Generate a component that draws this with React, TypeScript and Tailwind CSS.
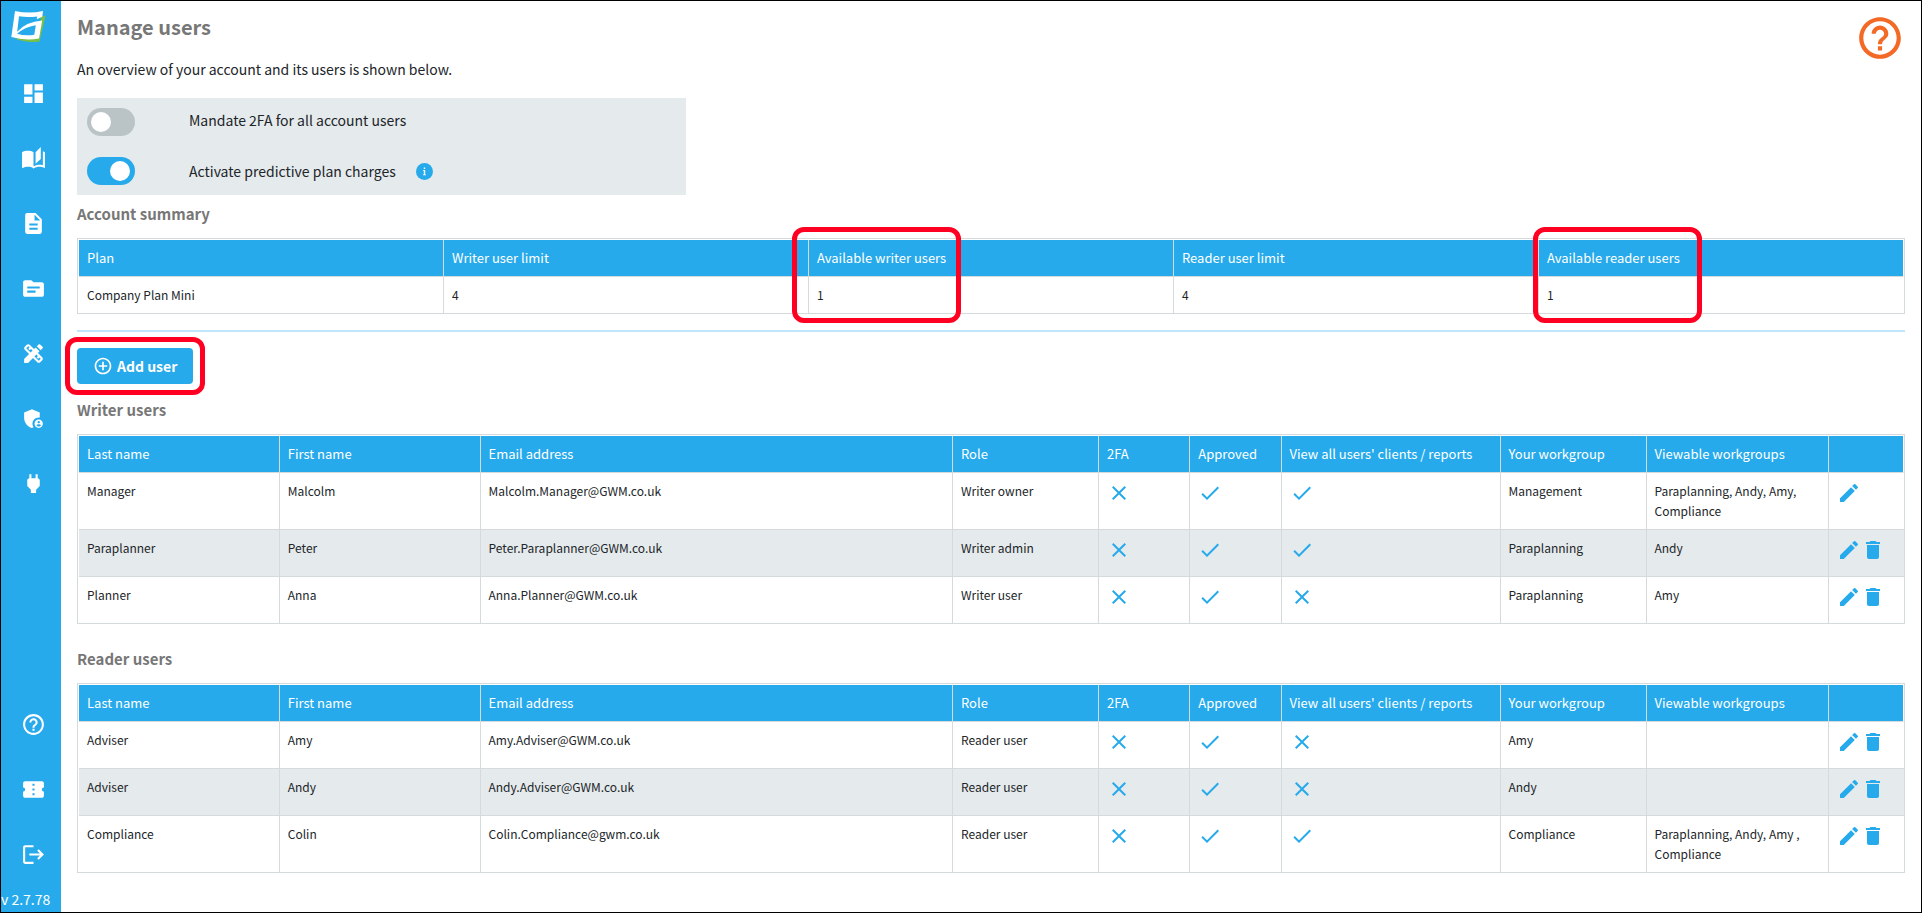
import React from 'react';
import type { IconType } from 'react-icons';
import {
  MdAddCircleOutline,
  MdAdminPanelSettings,
  MdAutoStories,
  MdCheck,
  MdClose,
  MdConfirmationNumber,
  MdDashboard,
  MdDelete,
  MdDescription,
  MdDesignServices,
  MdEdit,
  MdHelpOutline,
  MdLogout,
  MdPower,
  MdTopic,
} from 'react-icons/md';

interface NavItem {
  label: string;
  icon: IconType;
}

interface User {
  lastName: string;
  firstName: string;
  email: string;
  role: string;
  twoFactor: boolean;
  approved: boolean;
  viewAll: boolean;
  workgroup: string;
  viewable: string;
  canDelete: boolean;
}

const MAIN_NAV: NavItem[] = [
  { label: 'Dashboard', icon: MdDashboard },
  { label: 'Library', icon: MdAutoStories },
  { label: 'Reports', icon: MdDescription },
  { label: 'Templates', icon: MdTopic },
  { label: 'Design', icon: MdDesignServices },
  { label: 'Administration', icon: MdAdminPanelSettings },
  { label: 'Integrations', icon: MdPower },
];

const FOOTER_NAV: NavItem[] = [
  { label: 'Help', icon: MdHelpOutline },
  { label: 'Tickets', icon: MdConfirmationNumber },
  { label: 'Log out', icon: MdLogout },
];

const SUMMARY = [
  { title: 'Plan', value: 'Company Plan Mini', highlight: '' },
  { title: 'Writer user limit', value: '4', highlight: '' },
  { title: 'Available writer users', value: '1', highlight: '-left-[17px]' },
  { title: 'Reader user limit', value: '4', highlight: '' },
  { title: 'Available reader users', value: '1', highlight: '-left-1.5' },
];

const WRITERS: User[] = [
  { lastName: 'Manager', firstName: 'Malcolm', email: 'Malcolm.Manager@GWM.co.uk', role: 'Writer owner', twoFactor: false, approved: true, viewAll: true, workgroup: 'Management', viewable: 'Paraplanning, Andy, Amy, Compliance', canDelete: false },
  { lastName: 'Paraplanner', firstName: 'Peter', email: 'Peter.Paraplanner@GWM.co.uk', role: 'Writer admin', twoFactor: false, approved: true, viewAll: true, workgroup: 'Paraplanning', viewable: 'Andy', canDelete: true },
  { lastName: 'Planner', firstName: 'Anna', email: 'Anna.Planner@GWM.co.uk', role: 'Writer user', twoFactor: false, approved: true, viewAll: false, workgroup: 'Paraplanning', viewable: 'Amy', canDelete: true },
];

const READERS: User[] = [
  { lastName: 'Adviser', firstName: 'Amy', email: 'Amy.Adviser@GWM.co.uk', role: 'Reader user', twoFactor: false, approved: true, viewAll: false, workgroup: 'Amy', viewable: '', canDelete: true },
  { lastName: 'Adviser', firstName: 'Andy', email: 'Andy.Adviser@GWM.co.uk', role: 'Reader user', twoFactor: false, approved: true, viewAll: false, workgroup: 'Andy', viewable: '', canDelete: true },
  { lastName: 'Compliance', firstName: 'Colin', email: 'Colin.Compliance@gwm.co.uk', role: 'Reader user', twoFactor: false, approved: true, viewAll: true, workgroup: 'Compliance', viewable: 'Paraplanning, Andy, Amy , Compliance', canDelete: true },
];

const USER_COLUMNS = [
  { title: 'Last name', width: 'w-[11%]' },
  { title: 'First name', width: 'w-[11%]' },
  { title: 'Email address', width: 'w-auto' },
  { title: 'Role', width: 'w-[8%]' },
  { title: '2FA', width: 'w-[5%]' },
  { title: 'Approved', width: 'w-[5%]' },
  { title: "View all users' clients / reports", width: 'w-[12%]' },
  { title: 'Your workgroup', width: 'w-[8%]' },
  { title: 'Viewable workgroups', width: 'w-[10%]' },
  { title: '', width: 'w-[75px]' },
];

const TH = 'relative h-[37px] border-r border-b border-[#d5dadc] bg-[#27aaeb] px-2 text-left font-normal text-white whitespace-nowrap last:border-r-white';
const TD = 'border-r border-b border-[#d5dadc] px-2 py-2 align-top last:border-r-0';

const Logo = () => (
  <svg viewBox="0 0 36 34" className="h-[34px] w-9" aria-hidden="true">
    <path fill="#7ac143" d="M30 6 34.500 4.500 28.500 30.500Q15 32 3.500 27.500L27 27.500Z" />
    <path
      fill="#fff"
      fillRule="evenodd"
      d="M4 0Q18 3 32 0L31.300 5.700 25.700 8.300 26.200 5.400Q17 6.800 8 5.300L6.200 20.800Q15 10.500 31.200 9.400L28 27.500Q14 30 0.300 26ZM24.800 14.200Q13.500 16 6 22.800 14 25.300 23.300 23.800Z"
    />
  </svg>
);

const InfoIcon = () => (
  <svg viewBox="0 0 17 17" className="size-[17px]" aria-hidden="true">
    <circle cx="8.500" cy="8.500" r="8.500" fill="#27aaeb" />
    <path fill="#fff" d="M7.800 4.500h1.400v1.400H7.800zM7 7h2.200v4.500h.8v.8H7v-.8h.8V7.800H7z" />
  </svg>
);

const Highlight: React.FC<{ className: string }> = ({ className }) => (
  <span className={`pointer-events-none absolute z-10 rounded-xl border-5 border-[#ff0022] ${className}`} />
);

const NavList: React.FC<{ items: NavItem[] }> = ({ items }) => (
  <ul>
    {items.map(({ label, icon: Icon }) => (
      <li key={label}>
        <a href="#" aria-label={label} className="flex h-[65px] items-center justify-center pl-1">
          <Icon size={25} />
        </a>
      </li>
    ))}
  </ul>
);

const Sidebar = () => (
  <aside className="flex w-[60px] shrink-0 flex-col bg-[#27aaeb] text-white">
    <a href="#" aria-label="Home" className="block h-[60px] pt-2.5 pl-2.5">
      <Logo />
    </a>
    <NavList items={MAIN_NAV} />
    <div className="mt-auto">
      <NavList items={FOOTER_NAV} />
      <p className="h-[25px] text-sm leading-6 whitespace-nowrap">v 2.7.78</p>
    </div>
  </aside>
);

const Toggle: React.FC<{ id: string; defaultChecked?: boolean }> = ({ id, defaultChecked }) => (
  <input
    id={id}
    type="checkbox"
    role="switch"
    defaultChecked={defaultChecked}
    className="relative h-7 w-12 shrink-0 cursor-pointer appearance-none rounded-full bg-[#bac4c6] before:absolute before:top-1 before:left-1 before:size-5 before:rounded-full before:bg-white checked:bg-[#27aaeb] checked:before:left-[23px]"
  />
);

const Flag: React.FC<{ value: boolean }> = ({ value }) =>
  value ? (
    <MdCheck size={24} className="text-[#27aaeb]" title="Yes" />
  ) : (
    <MdClose size={24} className="text-[#27aaeb]" title="No" />
  );

const UserTable: React.FC<{ title: string; users: User[] }> = ({ title, users }) => (
  <section>
    <h2 className="text-[15px] leading-6 font-bold text-[#777]">{title}</h2>
    <div className="mt-3 border border-[#d5dadc] pt-px pl-px">
      <table className="w-full table-fixed border-separate border-spacing-0 text-xs leading-5">
        <colgroup>
          {USER_COLUMNS.map((column) => (
            <col key={column.title} className={column.width} />
          ))}
        </colgroup>
        <thead>
          <tr className="text-[13px]">
            {USER_COLUMNS.map((column) => (
              <th key={column.title} className={TH}>{column.title}</th>
            ))}
          </tr>
        </thead>
        <tbody>
          {users.map((user) => (
            <tr key={user.email} className="h-[47px] even:bg-[#e5eaec] last:h-[46px] last:*:border-b-0">
              <td className={TD}>{user.lastName}</td>
              <td className={TD}>{user.firstName}</td>
              <td className={TD}>{user.email}</td>
              <td className={TD}>{user.role}</td>
              <td className={TD}><Flag value={user.twoFactor} /></td>
              <td className={TD}><Flag value={user.approved} /></td>
              <td className={TD}><Flag value={user.viewAll} /></td>
              <td className={TD}>{user.workgroup}</td>
              <td className={TD}>{user.viewable}</td>
              <td className={TD}>
                <div className="flex text-[#27aaeb]">
                  <button type="button" aria-label={`Edit ${user.firstName}`} className="cursor-pointer">
                    <MdEdit size={24} />
                  </button>
                  {user.canDelete && (
                    <button type="button" aria-label={`Delete ${user.firstName}`} className="cursor-pointer">
                      <MdDelete size={24} />
                    </button>
                  )}
                </div>
              </td>
            </tr>
          ))}
        </tbody>
      </table>
    </div>
  </section>
);

const App: React.FC = () => (
  <div className="flex min-h-screen border border-black bg-white font-['Noto_Sans_CJK_SC',sans-serif] text-[#212529]">
    <Sidebar />

    <main className="min-w-0 flex-1 px-4 pt-3">
      <header className="flex h-[85px] items-start justify-between">
        <div>
          <h1 className="text-xl leading-7 font-bold text-[#777]">Manage users</h1>
          <p className="mt-4 text-sm leading-6">An overview of your account and its users is shown below.</p>
        </div>
        <a href="#" aria-label="Help" className="text-[#f26a25]">
          <MdHelpOutline size={50} />
        </a>
      </header>

      <div className="flex w-1/3 flex-col gap-[21px] bg-[#e5eaec] p-2.5">
        <div className="flex items-center gap-[54px]">
          <Toggle id="mandate-2fa" />
          <label htmlFor="mandate-2fa" className="pb-1 text-sm leading-6">Mandate 2FA for all account users</label>
        </div>
        <div className="flex items-center gap-[54px]">
          <Toggle id="predictive-charges" defaultChecked />
          <div className="flex items-center gap-5">
            <label htmlFor="predictive-charges" className="text-sm leading-6">Activate predictive plan charges</label>
            <InfoIcon />
          </div>
        </div>
      </div>

      <section className="mt-[7px]">
        <h2 className="text-[15px] leading-6 font-bold text-[#777]">Account summary</h2>
        <div className="mt-3 border border-[#d5dadc] pt-px pl-px">
          <table className="w-full table-fixed border-separate border-spacing-0 text-xs leading-5">
            <thead>
              <tr className="text-[13px]">
                {SUMMARY.map((item) => (
                  <th key={item.title} className={TH}>
                    {item.title}
                    {item.highlight && <Highlight className={`-top-[13px] h-24 w-[169px] ${item.highlight}`} />}
                  </th>
                ))}
              </tr>
            </thead>
            <tbody>
              <tr className="*:border-b-0">
                {SUMMARY.map((item) => (
                  <td key={item.title} className={TD}>{item.value}</td>
                ))}
              </tr>
            </tbody>
          </table>
        </div>
      </section>

      <hr className="mt-4 border-t-2 border-[#bfe6fa]" />

      <div className="relative mt-4 mb-3.5 w-fit">
        <button type="button" className="flex h-9 cursor-pointer items-center gap-1 rounded-sm bg-[#27aaeb] px-4 text-sm font-bold text-white">
          <MdAddCircleOutline size={20} />
          Add user
        </button>
        <Highlight className="-inset-x-3 -inset-y-[11px]" />
      </div>

      <div className="flex flex-col gap-[23px]">
        <UserTable title="Writer users" users={WRITERS} />
        <UserTable title="Reader users" users={READERS} />
      </div>
    </main>
  </div>
);

export default App;
